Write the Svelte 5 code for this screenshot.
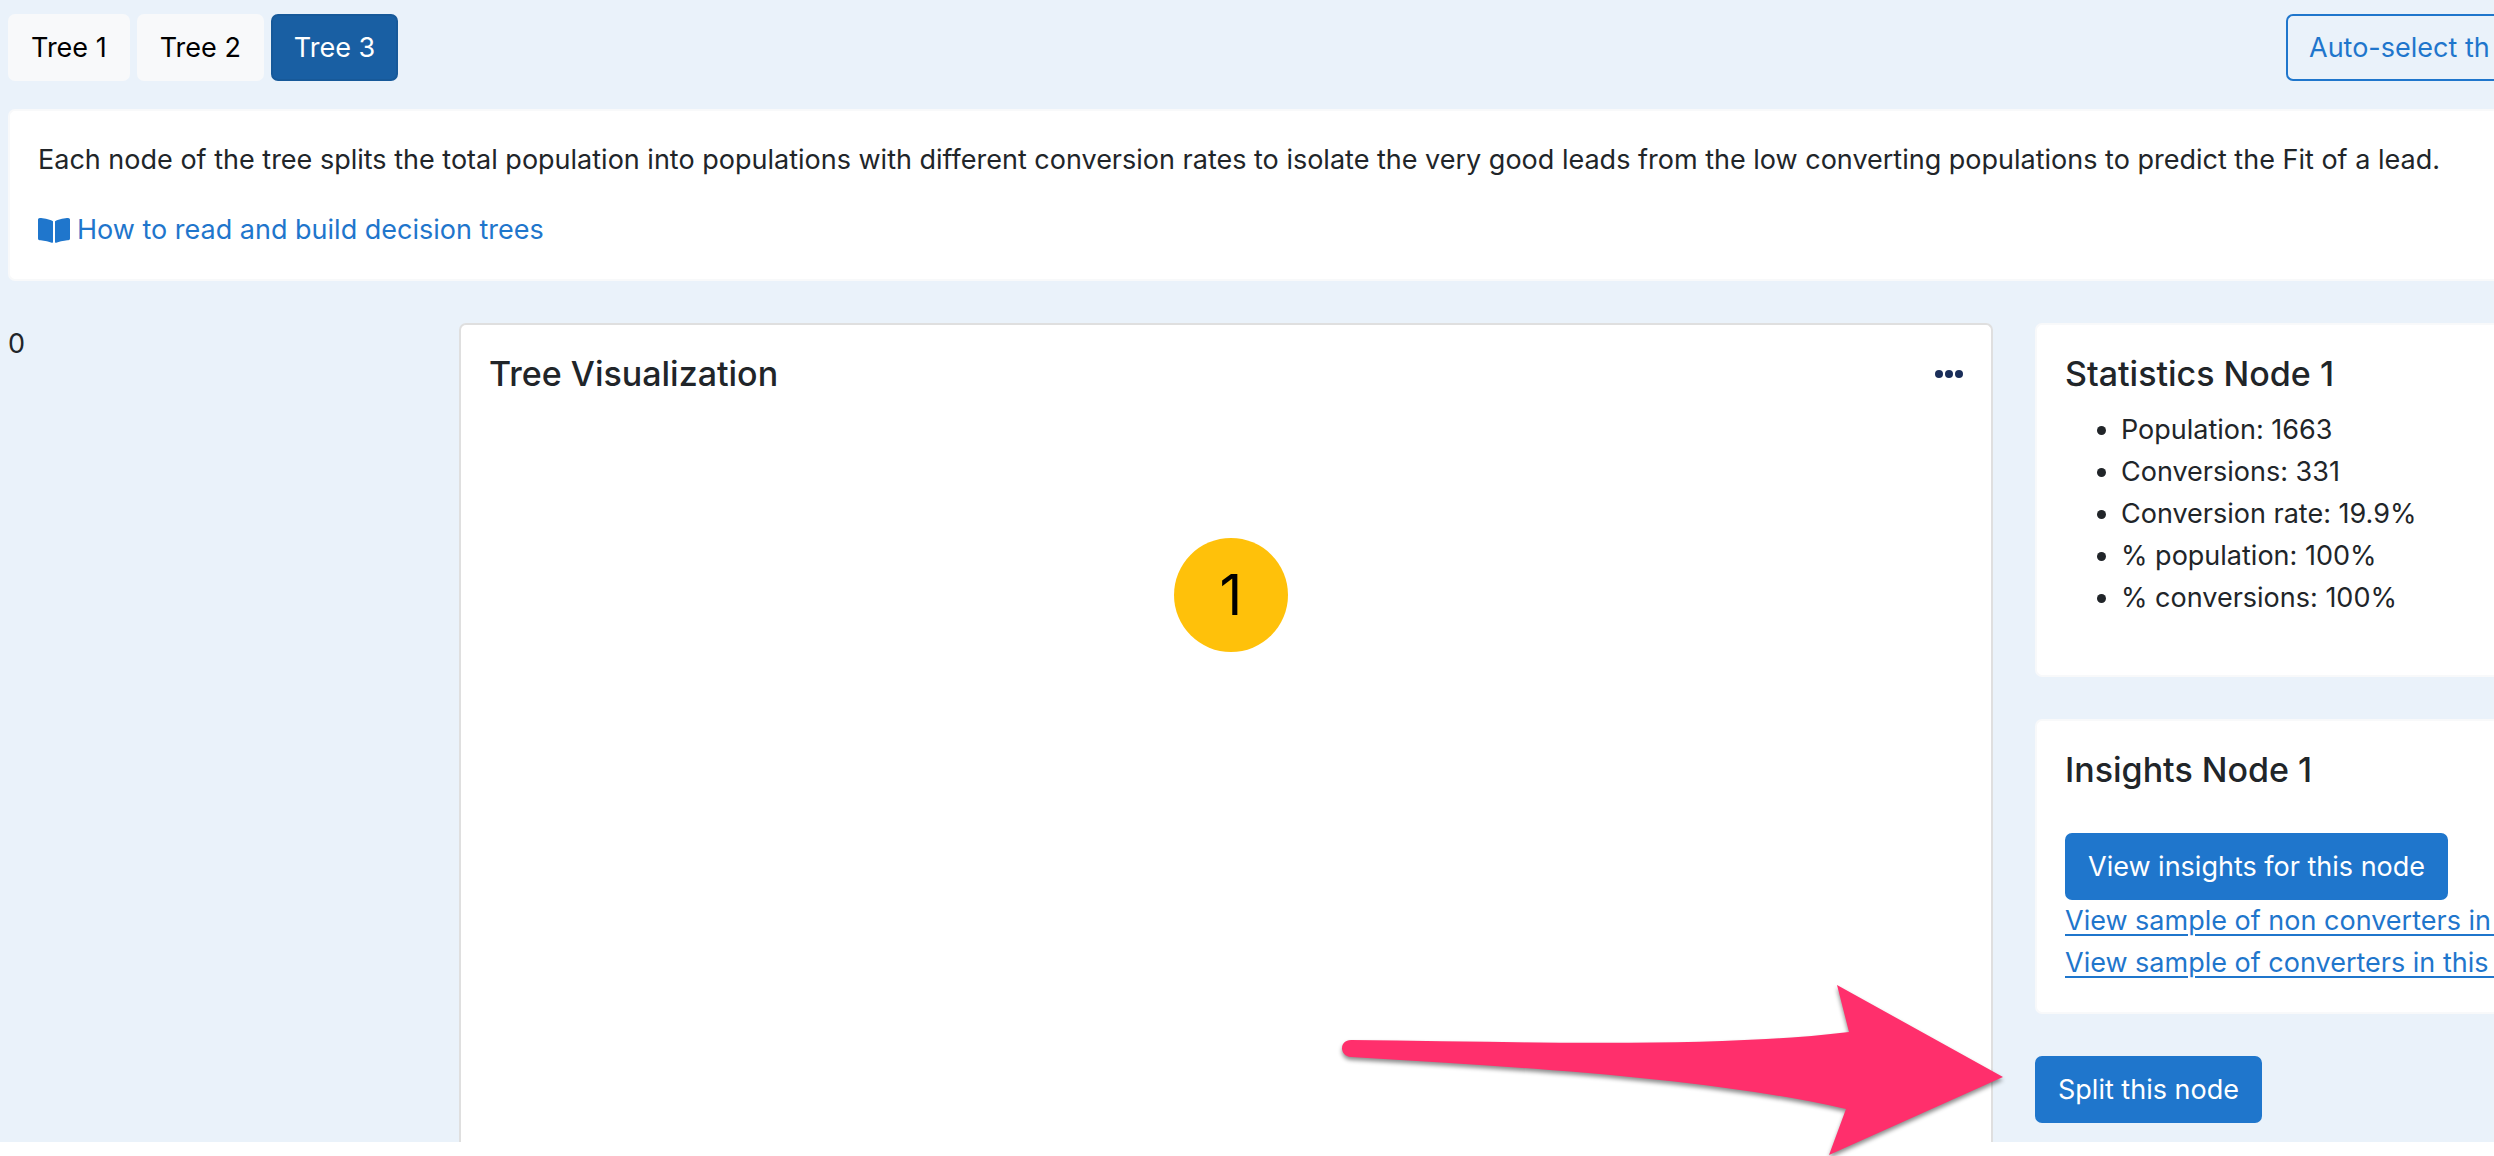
<script>
  const trees = ['Tree 1', 'Tree 2', 'Tree 3'];
  let selectedTree = $state('Tree 3');

  const node = {
    id: 1,
    stats: [
      { label: 'Population', value: '1663' },
      { label: 'Conversions', value: '331' },
      { label: 'Conversion rate', value: '19.9%' },
      { label: '% population', value: '100%' },
      { label: '% conversions', value: '100%' }
    ]
  };
</script>

<div class="page">
  <main>
    <header class="toolbar">
      <nav class="tabs">
        {#each trees as tree}
          <button class="btn tab" class:active={tree === selectedTree} onclick={() => (selectedTree = tree)}>
            {tree}
          </button>
        {/each}
      </nav>
      <button class="btn auto-select">Auto-select th</button>
    </header>

    <section class="card bleed intro">
      <p>Each node of the tree splits the total population into populations with different conversion rates to isolate the very good leads from the low converting populations to predict the Fit of a lead.</p>
      <a class="help" href="#how-to">
        <svg class="book" viewBox="0 0 576 448" aria-hidden="true">
          <path d="M542 0c-54 3-162 14-229 55-5 3-7 8-7 13v363c0 12 13 19 23 14 69-35 168-44 217-47 17-1 30-14 30-30V31c0-17-15-31-34-31zM263 55C196 14 88 3 34 0 15-1 0 13 0 31v337c0 16 13 29 30 30 49 3 148 12 217 47 10 5 23-2 23-14V68c0-5-2-10-7-13z" />
        </svg>
        How to read and build decision trees
      </a>
    </section>

    <div class="layout">
      <div class="count">0</div>

      <section class="panel">
        <div class="panel-head">
          <h2>Tree Visualization</h2>
          <button class="more" aria-label="More options">
            <svg viewBox="0 0 28 8" aria-hidden="true">
              <circle cx="4" cy="4" r="4" />
              <circle cx="14" cy="4" r="4" />
              <circle cx="24" cy="4" r="4" />
            </svg>
          </button>
        </div>
        <div class="canvas">
          <button class="node">{node.id}</button>
        </div>

        <!-- pointer towards the split button -->
        <svg class="arrow" viewBox="0 0 664 172" aria-hidden="true">
          <path d="M11 56C190 58 380 64 509 48L497 1L663 93L489 171L506 125C370 94 180 83 11 73C-1 72-1 56 11 56Z" />
        </svg>
      </section>

      <aside>
        <section class="card bleed">
          <h2>Statistics Node {node.id}</h2>
          <ul>
            {#each node.stats as stat}
              <li>{stat.label}: {stat.value}</li>
            {/each}
          </ul>
        </section>

        <section class="card bleed">
          <h2>Insights Node {node.id}</h2>
          <div class="insights">
            <button class="btn primary">View insights for this node</button>
            <a href="#non-converters">View sample of non converters in&nbsp;</a>
            <a href="#converters">View sample of converters in this&nbsp;</a>
          </div>
        </section>

        <button class="btn primary">Split this node</button>
      </aside>
    </div>
  </main>
</div>

<style>
  :global(body) {
    margin: 0;
    background: #fff;
  }

  .page {
    padding-bottom: 14px;
  }

  main {
    padding: 14px 0 0 8px;
    background: #eaf2fa;
    color: #212529;
    font-family: Inter, 'Liberation Sans', sans-serif;
    font-size: 27px;
    line-height: 42px;
  }

  h2 {
    margin: 0 0 14px;
    font-size: 34px;
    font-weight: 500;
    line-height: 42px;
  }

  a {
    color: #1f76cc;
    white-space: nowrap;
  }

  /* --- BUTTONS --- */
  .btn {
    box-sizing: border-box;
    height: 67px;
    padding: 0 21px;
    border: 2px solid transparent;
    border-radius: 7px;
    font: inherit;
    white-space: nowrap;
    cursor: pointer;
  }

  .tab {
    background: #f8f9fa;
    border-color: #f8f9fa;
    color: #000;
  }

  .tab.active {
    background: #195fa3;
    border-color: #175999;
    color: #fff;
  }

  .primary {
    background: #1f76cc;
    border-color: #1f76cc;
    color: #fff;
  }

  .auto-select {
    width: 208px;
    padding-right: 0;
    border-color: #1f76cc;
    border-right: 0;
    border-radius: 7px 0 0 7px;
    background: transparent;
    color: #1f76cc;
    text-align: left;
  }

  /* --- TOOLBAR --- */
  .toolbar {
    display: flex;
    justify-content: space-between;
    margin-bottom: 28px;
  }

  .tabs {
    display: flex;
    gap: 7px;
  }

  /* --- CARDS --- */
  .card {
    padding: 28px;
    border: 2px solid #f8f9fa;
    border-radius: 7px;
    background: #fff;
  }

  .bleed {
    padding-right: 0;
    border-right: 0;
    border-top-right-radius: 0;
    border-bottom-right-radius: 0;
  }

  .intro {
    margin-bottom: 42px;
  }

  .intro p {
    margin: 0 0 28px;
    white-space: nowrap;
  }

  .help {
    display: flex;
    align-items: center;
    gap: 7px;
    text-decoration: none;
  }

  .book {
    width: 32px;
    height: 25px;
    fill: currentColor;
  }

  /* --- COLUMNS --- */
  .layout {
    display: grid;
    grid-template-columns: 409px minmax(0, 1fr) 459px;
    gap: 42px;
  }

  .panel {
    position: relative;
    padding: 28px;
    border: 2px solid #dfdfdf;
    border-bottom: 0;
    border-radius: 7px 7px 0 0;
    background: #fff;
  }

  .panel-head {
    display: flex;
    justify-content: space-between;
    align-items: flex-start;
  }

  .more {
    display: flex;
    align-items: center;
    height: 42px;
    padding: 0;
    border: 0;
    background: none;
    cursor: pointer;
  }

  .more svg {
    width: 28px;
    height: 8px;
    fill: #1a2e59;
  }

  .canvas {
    display: flex;
    justify-content: center;
    padding: 129px 0 0 10px;
  }

  .node {
    width: 114px;
    height: 114px;
    padding: 0;
    border: 0;
    border-radius: 50%;
    background: #ffc10a;
    color: #000;
    font: inherit;
    font-size: 56px;
    cursor: pointer;
  }

  .arrow {
    position: absolute;
    right: -13px;
    bottom: -14px;
    width: 664px;
    height: 172px;
    overflow: visible;
    fill: #ff2f6c;
    filter: drop-shadow(0 3px 2px rgba(0, 0, 0, 0.45));
    pointer-events: none;
  }

  aside {
    display: flex;
    flex-direction: column;
    gap: 42px;
    padding-bottom: 19px;
  }

  aside > .btn {
    align-self: flex-start;
  }

  ul {
    margin: 0 0 28px;
    padding-left: 56px;
  }

  .insights {
    display: flex;
    flex-direction: column;
    align-items: flex-start;
    padding-top: 28px;
    overflow: hidden;
  }

  .insights a {
    text-decoration-thickness: 2px;
    text-underline-offset: 4px;
  }
</style>
